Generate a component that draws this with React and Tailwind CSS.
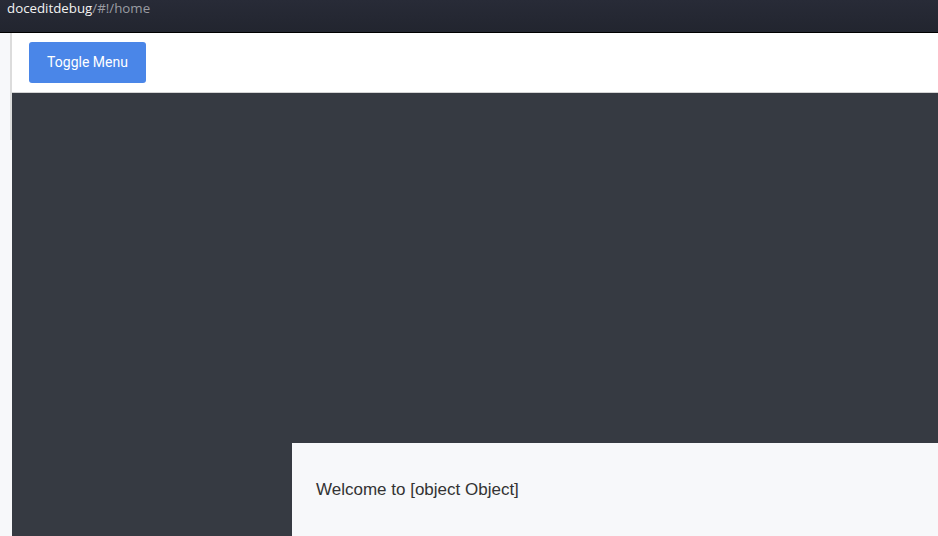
import React from "react";

// Top address strip of the debug window
const AddressBar = () => (
  <div className="h-[33px] bg-gradient-to-b from-[#282b37] to-[#22252f] border-b border-black pl-[7px] overflow-hidden">
    <div className="text-[13.3px] leading-[16px]" style={{ fontFamily: '"Open Sans", "Noto Sans", sans-serif' }}>
      <span className="text-[#f2f2f2]">doceditdebug</span>
      <span className="text-[#9a9ca3]">/#!/home</span>
    </div>
  </div>
);

const App = () => {
  return (
    <div className="w-[938px] h-[536px] overflow-hidden flex flex-col bg-[#363a42]" style={{ fontFamily: '"Liberation Sans", Arial, sans-serif' }}>
      <AddressBar />

      <div className="flex flex-1 min-h-0">
        {/* left rail */}
        <div className="w-[12px] bg-[#f7f8fa] flex justify-end">
          <div className="w-[2px] h-[107px] bg-[#dcdcdc]" />
        </div>

        <div className="flex-1 flex flex-col min-w-0">
          {/* header */}
          <div className="h-[60px] bg-white border-b border-[#d4d4d4] pl-[17px] pt-[9px]">
            <button
              className="h-[41px] w-[117px] rounded-[3px] bg-[#4a86e8] text-white text-[14px]"
              style={{ fontFamily: "Roboto, sans-serif" }}
            >
              Toggle Menu
            </button>
          </div>

          {/* content */}
          <div className="flex-1 pt-[350px] pl-[280px]">
            <div className="h-full bg-[#f7f8fa] pl-[24px] pt-[36px]">
              <p className="text-[17px] leading-[22px] text-[#333]">Welcome to [object Object]</p>
            </div>
          </div>
        </div>
      </div>
    </div>
  );
};

export default App;
